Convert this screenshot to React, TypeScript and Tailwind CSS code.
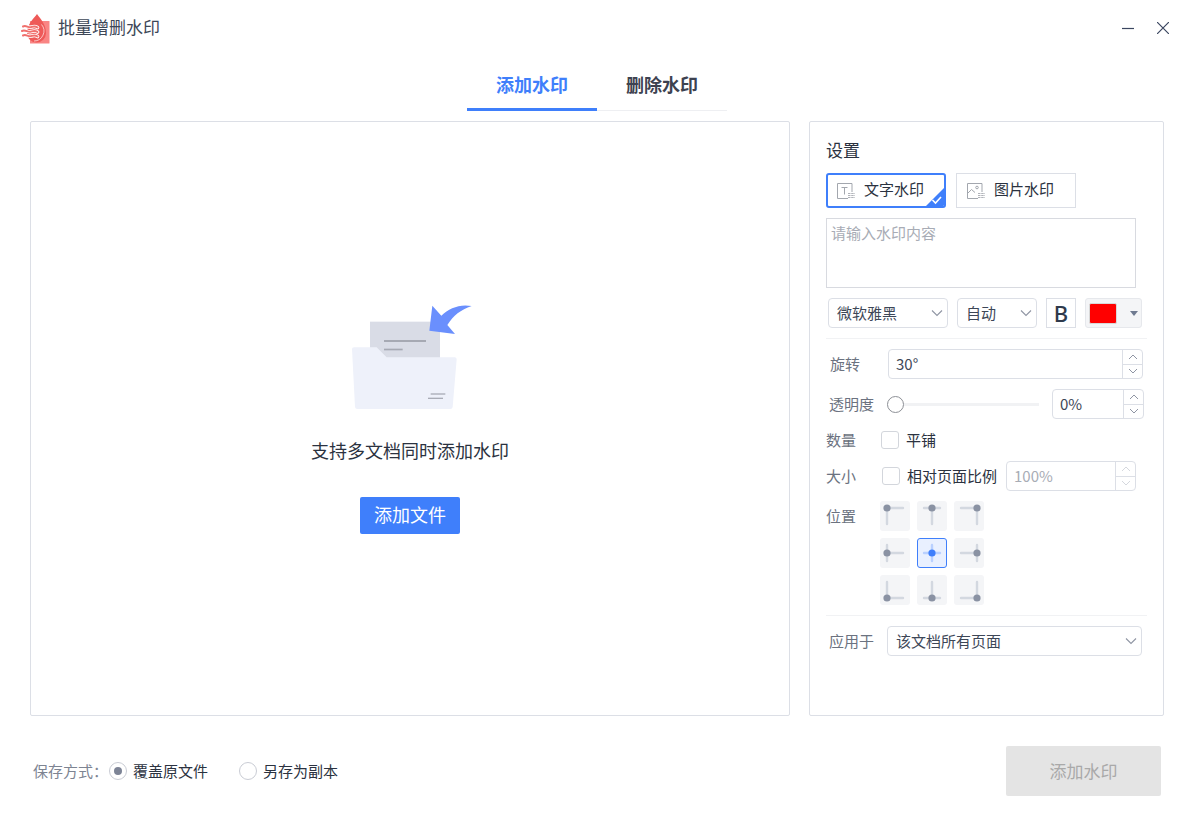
import React from 'react'

const cjk = 'font-["Noto_Sans_CJK_SC","Noto_Sans",sans-serif]'

function Chevron({ className = '' }: { className?: string }) {
  return (
    <svg className={className} width="12" height="8" viewBox="0 0 12 8" fill="none" stroke="#8f95a3" strokeWidth="1.1">
      <path d="M1 1.5l5 5 5-5" />
    </svg>
  )
}

function Select({ label, width, className = '' }: { label: string; width: string; className?: string }) {
  return (
    <div className={`${width} ${className} h-[30px] flex items-center justify-between pl-[8px] pr-[4px] border border-[#dcdfe6] rounded-[4px] text-[15px] text-[#3d4757]`}>
      <span>{label}</span>
      <Chevron />
    </div>
  )
}

function Stepper({ value, width, disabled = false }: { value: string; width: string; disabled?: boolean }) {
  const stroke = disabled ? '#d5d8de' : '#8f95a3'
  return (
    <div className={`${width} h-[30px] flex items-center border border-[#dcdfe6] rounded-[4px]`}>
      <span className={`flex-1 pl-[7px] text-[15px] ${disabled ? 'text-[#a8acb5]' : 'text-[#3d4757]'}`}>{value}</span>
      <div className="w-[20px] h-full flex flex-col border-l border-[#dcdfe6]">
        <div className="flex-1 flex items-center justify-center border-b border-[#dcdfe6]">
          <svg width="10" height="6" viewBox="0 0 10 6" fill="none" stroke={stroke}><path d="M1 5l4-4 4 4" /></svg>
        </div>
        <div className="flex-1 flex items-center justify-center">
          <svg width="10" height="6" viewBox="0 0 10 6" fill="none" stroke={stroke}><path d="M1 1l4 4 4-4" /></svg>
        </div>
      </div>
    </div>
  )
}

function Checkbox() {
  return <span className="block w-[18px] h-[18px] border border-[#d3d6dc] rounded-[3px] bg-white shrink-0" />
}

const positions = [
  { cx: 7, cy: 7 },
  { cx: 15, cy: 7 },
  { cx: 23, cy: 7 },
  { cx: 7, cy: 15 },
  { cx: 15, cy: 15 },
  { cx: 23, cy: 15 },
  { cx: 7, cy: 23 },
  { cx: 15, cy: 23 },
  { cx: 23, cy: 23 },
]

function PositionCell({ cx, cy, active }: { cx: number; cy: number; active: boolean }) {
  const line = active ? '#b9d0ff' : '#d3d8e0'
  const dot = active ? '#3f7ffb' : '#8a92a3'
  return (
    <div className={`w-[30px] h-[30px] rounded-[3px] ${active ? 'bg-[#e9f0ff] border border-[#3f7ffb]' : 'bg-[#f4f5f7]'}`}>
      <svg width="30" height="30" viewBox="0 0 30 30" className={active ? '-m-px' : ''} strokeWidth="2.4" strokeLinecap="round" fill="none">
        <path d={`M7 ${cy}H23`} stroke={line} />
        <path d={`M${cx} 7V23`} stroke={line} />
        <circle cx={cx} cy={cy} r="3.6" fill={dot} />
      </svg>
    </div>
  )
}

function Logo() {
  const waves = ['M23 24.5c3-1.6 5 1.4 8 .6s4-1.300 6.500.4', 'M22 29c3-1.600 6 1.400 9 .6s4-1.300 6.500.4', 'M23 33.500c3-1.600 5 1.400 8 .6s4-1.300 6.500.4']
  return (
    <svg width="30" height="33" viewBox="20 10 30 33" className="shrink-0">
      <rect x="30" y="19" width="19.500" height="22.500" rx="0.500" fill="#f98584" />
      <path d="M37 12C40 16.500 46 22 46 31A9.500 9.500 0 0 1 27 31C27 22 34 16.500 37 12Z" fill="#ee5a58" />
      <path d="M41.500 22.500A10 10 0 0 1 34 39" fill="none" stroke="#fff" strokeWidth="0.900" opacity="0.700" />
      {waves.map((d) => (
        <path key={d} d={d} fill="none" stroke="#fff" strokeWidth="3.600" strokeLinecap="round" />
      ))}
      {waves.map((d) => (
        <path key={d} d={d} fill="none" stroke="#f0706d" strokeWidth="2" strokeLinecap="round" />
      ))}
    </svg>
  )
}

function FolderArt() {
  return (
    <svg width="140" height="125" viewBox="0 0 420 375">
      <rect x="90" y="80" width="210" height="120" fill="#d9dce6" />
      <rect x="132" y="135" width="126" height="6" fill="#a6a9b3" />
      <rect x="132" y="161" width="56" height="5" fill="#a6a9b3" />
      <path d="M36 162 Q36 157 42 157 H110 L140 187 H344 Q350 187 350 193 L338 336 Q337 342 331 342 H52 Q46 342 45 336Z" fill="#eef1fa" />
      <rect x="272" y="295" width="44" height="4" fill="#a9acb6" />
      <rect x="264" y="308" width="45" height="4" fill="#a9acb6" />
      <path d="M277 32 L268 107 L345 117 L322 90 C340 62 362 44 395 33 C358 26 328 40 304 62Z" fill="#6a8ffd" />
    </svg>
  )
}

function TextTypeIcon() {
  return (
    <svg width="18" height="16" viewBox="0 0 18 16" fill="none" stroke="#a3a7ae" strokeWidth="1">
      <path d="M11 15.500H0.500V0.500H15V9" />
      <path d="M4.500 4.500H10.500M7.500 4.500V11.500" />
      <path d="M11 10.500h7M11 12.500h7M11 14.500h7" stroke="#b0b3b9" strokeDasharray="2.500 0.700" />
    </svg>
  )
}

function ImageTypeIcon() {
  return (
    <svg width="18" height="16" viewBox="0 0 18 16" fill="none" stroke="#a3a7ae" strokeWidth="1">
      <path d="M11 15.500H0.500V0.500H15V9" />
      <path d="M1 10l3.500-3.500L8 9.500" />
      <circle cx="10" cy="4.500" r="1.300" />
      <path d="M11 10.500h7M11 12.500h7M11 14.500h7" stroke="#b0b3b9" strokeDasharray="2.500 0.700" />
    </svg>
  )
}

function SettingsPanel() {
  return (
    <div className="w-[355px] h-[595px] border border-[#dcdfe6] rounded-[2px] pt-[16px] pl-[16px] text-[15px] text-[#3d4757]">
      <div className="h-[24px] leading-[24px] text-[17px] text-[#2b3240]">设置</div>

      <div className="mt-[11px] flex gap-[10px]">
        <div className="relative w-[120px] h-[35px] flex items-center pl-[9px] gap-[9px] border-2 border-[#3f7ffb] rounded-[3px] overflow-hidden">
          <TextTypeIcon />
          <span className="mb-[2px] text-[#2b3240]">文字水印</span>
          <svg className="absolute right-0 bottom-0" width="18" height="18" viewBox="0 0 18 18" fill="none">
            <path d="M18 0V18H0Z" fill="#3f7ffb" />
            <path d="M6.500 12l3 3 5.500-6" stroke="#fff" strokeWidth="1.600" />
          </svg>
        </div>
        <div className="w-[120px] h-[35px] flex items-center pl-[10px] gap-[9px] border border-[#dcdfe6]">
          <ImageTypeIcon />
          <span className="mb-[2px] text-[#2b3240]">图片水印</span>
        </div>
      </div>

      <div className="mt-[10px] w-[310px] h-[70px] border border-[#d8dae0] px-[4px] py-[3px] leading-[22px] text-[#a8acb5]">请输入水印内容</div>

      <div className="mt-[10px] ml-[2px] flex items-center">
        <Select label="微软雅黑" width="w-[120px]" />
        <Select label="自动" width="w-[80px]" className="ml-[9px]" />
        <div className="ml-[9px] w-[30px] h-[30px] flex items-center justify-center border border-[#dcdfe6] font-['Noto_Sans',sans-serif] font-medium text-[22px] text-[#2f3a4c]">B</div>
        <div className="ml-[9px] w-[57px] h-[30px] flex items-center pl-[3px] gap-[13px] bg-[#f4f5f7] border border-[#e6e8ec] rounded-[3px]">
          <span className="block w-[28px] h-[21px] bg-[#ff0000] border border-[#d8d8d8] rounded-[2px]" />
          <svg width="8" height="5" viewBox="0 0 8 5"><path d="M0 0h8L4 5Z" fill="#6f7a90" /></svg>
        </div>
      </div>

      <div className="mt-[10px] w-[321px] border-t border-[#f1f2f4]" />

      <div className="mt-[10px] flex items-center">
        <span className="w-[62px] pl-[4px] text-[#6b7280]">旋转</span>
        <Stepper value="30°" width="w-[255px]" />
      </div>

      <div className="mt-[10px] flex items-center">
        <span className="w-[61px] pl-[3px] text-[#6b7280]">透明度</span>
        <div className="relative w-[152px] h-[3px] bg-[#f1f2f4]">
          <span className="absolute left-0 top-[-7px] w-[17px] h-[17px] bg-white border border-[#8d9096] rounded-full" />
        </div>
        <Stepper value="0%" width="w-[92px] ml-[13px]" />
      </div>

      <div className="mt-[12px] flex items-center h-[18px]">
        <span className="w-[55px] text-[#6b7280]">数量</span>
        <Checkbox />
        <span className="ml-[7px] text-[#2b3240]">平铺</span>
      </div>

      <div className="mt-[12px] flex items-center">
        <span className="w-[56px] text-[#6b7280]">大小</span>
        <Checkbox />
        <span className="ml-[7px] w-[99px] text-[#2b3240]">相对页面比例</span>
        <Stepper value="100%" width="w-[130px]" disabled />
      </div>

      <div className="mt-[10px] flex items-start">
        <span className="w-[54px] mt-[4px] leading-[22px] text-[#6b7280]">位置</span>
        <div className="grid grid-cols-[30px_30px_30px] gap-[7px]">
          {positions.map((p, i) => (
            <PositionCell key={i} {...p} active={i === 4} />
          ))}
        </div>
      </div>

      <div className="mt-[10px] w-[321px] border-t border-[#f1f2f4]" />

      <div className="mt-[10px] flex items-center">
        <span className="w-[61px] pl-[3px] text-[#6b7280]">应用于</span>
        <Select label="该文档所有页面" width="w-[255px]" />
      </div>
    </div>
  )
}

export default function App() {
  return (
    <div className={`${cjk} w-[1192px] h-[818px] bg-white flex flex-col overflow-hidden`}>
      <header className="h-[56px] flex items-center pl-[20px] pr-[23px]">
        <Logo />
        <span className="ml-[8px] mb-[2px] text-[17px] text-[#3d4757]">批量增删水印</span>
        <div className="ml-auto flex items-center gap-[23px]">
          <svg width="12" height="12" viewBox="0 0 12 12" stroke="#3b4660" strokeWidth="1.200"><path d="M0 6.500H12" /></svg>
          <svg width="12" height="12" viewBox="0 0 12 12" stroke="#3b4660" strokeWidth="1.200"><path d="M0 0L12 12M12 0L0 12" /></svg>
        </div>
      </header>

      <nav className="h-[55px] pt-[14px] ml-[467px] w-[260px] flex border-b border-[#eeeff2]">
        <div className="w-[130px] h-[41px] -mb-px pb-[10px] flex items-center justify-center border-b-[3px] border-[#3f7ffb] text-[18px] font-bold text-[#3f7ffb]">添加水印</div>
        <div className="w-[130px] h-[41px] pb-[12px] flex items-center justify-center text-[18px] font-bold text-[#3d4250]">删除水印</div>
      </nav>

      <main className="mt-[10px] pl-[30px] flex gap-[19px]">
        <div className="w-[760px] h-[595px] border border-[#dcdfe6] rounded-[2px] pt-[173px] flex flex-col items-center">
          <FolderArt />
          <p className="mt-[18px] h-[24px] leading-[24px] text-[18px] text-[#2b3240]">支持多文档同时添加水印</p>
          <button className="mt-[35px] w-[100px] h-[37px] pb-[2px] bg-[#3f7ffb] rounded-[2px] text-[18px] text-white">添加文件</button>
        </div>
        <SettingsPanel />
      </main>

      <footer className="mt-[30px] pl-[33px] pr-[31px] flex items-center text-[15px]">
        <span className="w-[76px] text-[#7d8492]">保存方式：</span>
        <span className="w-[18px] h-[18px] flex items-center justify-center border border-[#c9ccd4] rounded-full">
          <span className="block w-[8px] h-[8px] rounded-full bg-[#7d8496]" />
        </span>
        <span className="ml-[6px] text-[#2b3240]">覆盖原文件</span>
        <span className="ml-[31px] w-[18px] h-[18px] border border-[#c9ccd4] rounded-full" />
        <span className="ml-[6px] text-[#2b3240]">另存为副本</span>
        <button className="ml-auto w-[155px] h-[50px] pb-[1px] bg-[#e4e4e4] rounded-[2px] text-[17px] text-[#a9a9a9]">添加水印</button>
      </footer>
    </div>
  )
}
